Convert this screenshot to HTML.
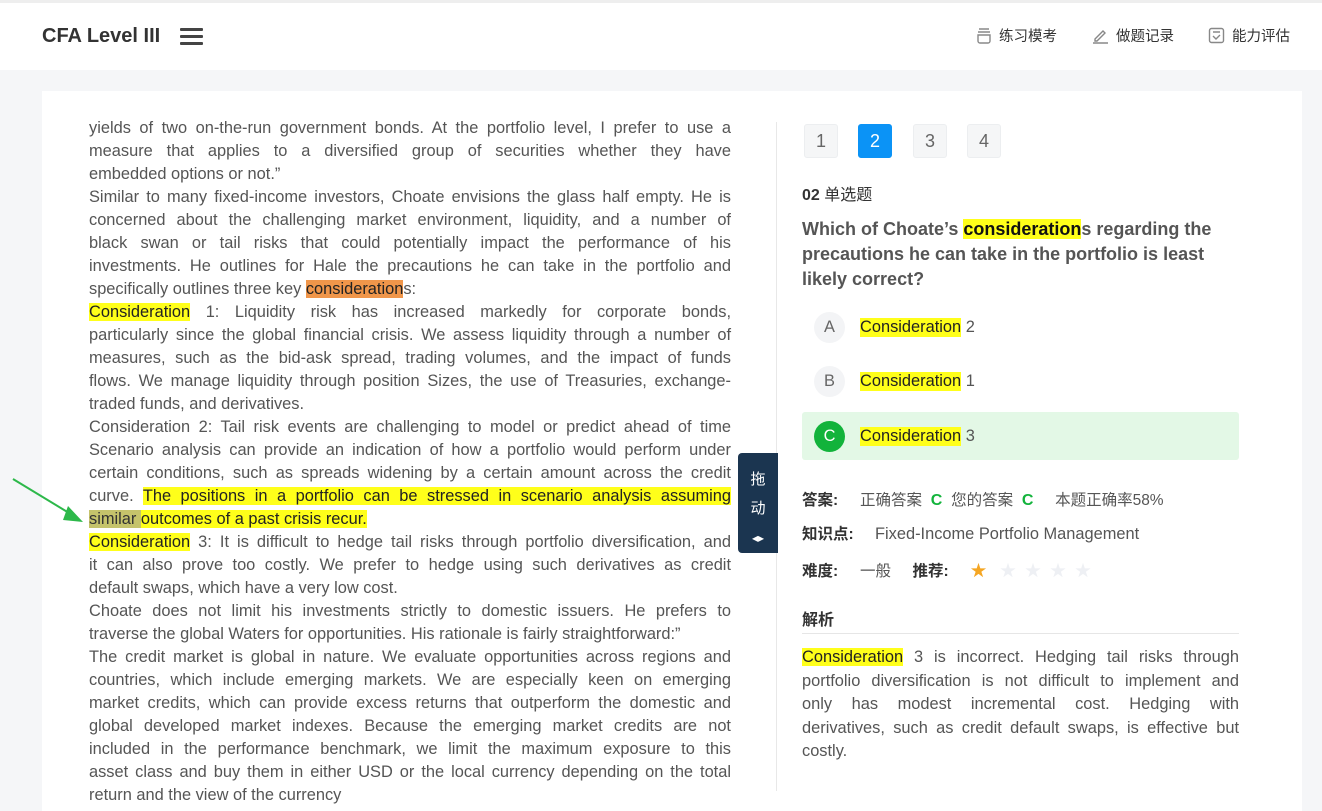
<!DOCTYPE html>
<html><head><meta charset="utf-8"><style>
*{margin:0;padding:0;box-sizing:border-box}
body{width:1322px;height:791px;overflow:hidden;background:#f5f6f8;font-family:"Liberation Sans","Noto Sans CJK SC",sans-serif;color:#555;position:relative}
.hdr{position:absolute;left:0;top:0;width:1322px;height:70px;background:#fff;border-top:3px solid #eee}
.logo{position:absolute;left:42px;top:22px;font-size:20px;font-weight:bold;color:#333}
.menu{position:absolute;left:180px;top:25px;width:23px}
.menu i{display:block;height:3px;background:#444;margin-bottom:4px;border-radius:1px}
.nav{position:absolute;top:22px;font-size:14.5px;color:#333;display:flex;align-items:center;gap:7px}
.card{position:absolute;left:42px;top:91px;width:1260px;height:720px;background:#fff}
.txt{position:absolute;left:89px;top:117px;width:642px;font-size:16.4px;line-height:23px;color:#555}
.txt div{text-align:justify;text-align-last:justify;white-space:nowrap}
.txt div.l{text-align-last:left}
.y{background:#ffff1a;color:#222}
.o{background:#f0964a;color:#222}
.g{background:#c5c36b;color:#333}
.div{position:absolute;left:776px;top:122px;width:1px;height:669px;background:#e8e8e8}
.drag{position:absolute;left:738px;top:453px;width:40px;height:100px;background:#1b3550;border-radius:4px 0 0 4px;color:#fff;font-size:15px;text-align:center;padding-top:12px;line-height:29px}
.pg{position:absolute;top:124px;width:34px;height:34px;border:1px solid #eceef0;background:#f5f6f7;border-radius:3px;text-align:center;line-height:32px;font-size:18px;color:#666}
.pg.a{background:#0b93f6;border-color:#0b93f6;color:#fff}
.r{position:absolute;left:802px}
.opt{position:absolute;left:802px;width:437px;height:48px;display:flex;align-items:center;font-size:16.4px;border-radius:3px}
.opt .c{width:31px;height:31px;border-radius:50%;background:#f3f4f6;margin-left:12px;margin-right:15px;text-align:center;line-height:31px;color:#666}
.lab{font-weight:bold;color:#333;display:inline-block}
.ex div{text-align:justify;text-align-last:justify;white-space:nowrap}
</style></head><body>
<div class="hdr">
<div class="logo">CFA Level III</div>
<div class="menu"><i></i><i></i><i></i></div>
<div class="nav" style="left:976px"><svg width="16" height="17" viewBox="0 0 16 17" fill="none" stroke="#888" stroke-width="1.4"><path d="M3 2h10M2 5h12M2 8h12v6a2 2 0 0 1-2 2H4a2 2 0 0 1-2-2z"/></svg>练习模考</div>
<div class="nav" style="left:1092px"><svg width="17" height="17" viewBox="0 0 17 17" fill="none" stroke="#888" stroke-width="1.4"><path d="M3 12l8-8 2 2-8 8H3zM1 16h15"/></svg>做题记录</div>
<div class="nav" style="left:1208px"><svg width="17" height="17" viewBox="0 0 17 17" fill="none" stroke="#888" stroke-width="1.4"><rect x="1.5" y="1.5" width="14" height="14" rx="2"/><path d="M5 5h7M5 9l3 3 4-4"/></svg>能力评估</div>
</div>
<div class="card"></div>
<div class="txt">
<div>yields of two on-the-run government bonds. At the portfolio level, I prefer to use a</div>
<div>measure that applies to a diversified group of securities whether they have</div>
<div class="l">embedded options or not.”</div>
<div>Similar to many fixed-income investors, Choate envisions the glass half empty. He is</div>
<div>concerned about the challenging market environment, liquidity, and a number of</div>
<div>black swan or tail risks that could potentially impact the performance of his</div>
<div>investments. He outlines for Hale the precautions he can take in the portfolio and</div>
<div class="l">specifically outlines three key <span class="o">consideration</span>s:</div>
<div><span class="y">Consideration</span> 1: Liquidity risk has increased markedly for corporate bonds,</div>
<div>particularly since the global financial crisis. We assess liquidity through a number of</div>
<div>measures, such as the bid-ask spread, trading volumes, and the impact of funds</div>
<div>flows. We manage liquidity through position Sizes, the use of Treasuries, exchange-</div>
<div class="l">traded funds, and derivatives.</div>
<div>Consideration 2: Tail risk events are challenging to model or predict ahead of time</div>
<div>Scenario analysis can provide an indication of how a portfolio would perform under</div>
<div>certain conditions, such as spreads widening by a certain amount across the credit</div>
<div>curve. <span class="y">The positions in a portfolio can be stressed in scenario analysis assuming</span></div>
<div class="l"><span class="g">similar </span><span class="y">outcomes of a past crisis recur.</span></div>
<div><span class="y">Consideration</span> 3: It is difficult to hedge tail risks through portfolio diversification, and</div>
<div>it can also prove too costly. We prefer to hedge using such derivatives as credit</div>
<div class="l">default swaps, which have a very low cost.</div>
<div>Choate does not limit his investments strictly to domestic issuers. He prefers to</div>
<div class="l">traverse the global Waters for opportunities. His rationale is fairly straightforward:”</div>
<div>The credit market is global in nature. We evaluate opportunities across regions and</div>
<div>countries, which include emerging markets. We are especially keen on emerging</div>
<div>market credits, which can provide excess returns that outperform the domestic and</div>
<div>global developed market indexes. Because the emerging market credits are not</div>
<div>included in the performance benchmark, we limit the maximum exposure to this</div>
<div>asset class and buy them in either USD or the local currency depending on the total</div>
<div class="l">return and the view of the currency</div>
</div>
<svg style="position:absolute;left:10px;top:476px" width="75" height="48" viewBox="0 0 75 48"><path d="M3 3L64 40" stroke="#2db84a" stroke-width="2"/><path d="M58 30L73 46 53 44z" fill="#2db84a"/></svg>
<div class="div"></div>
<div class="drag">拖<br>动<br><span style="font-size:12px">◂▸</span></div>
<div class="pg" style="left:804px">1</div>
<div class="pg a" style="left:858px">2</div>
<div class="pg" style="left:913px">3</div>
<div class="pg" style="left:967px">4</div>
<div class="r" style="top:181px;font-size:16px;color:#333"><b>02</b> 单选题</div>
<div class="r" style="top:217px;width:430px;font-size:18px;font-weight:bold;line-height:25px;color:#555">Which of Choate’s <span class="y" style="color:#111">consideration</span>s regarding the precautions he can take in the portfolio is least likely correct?</div>
<div class="opt" style="top:303px"><span class="c">A</span><span class="y">Consideration</span>&nbsp;2</div>
<div class="opt" style="top:357px"><span class="c">B</span><span class="y">Consideration</span>&nbsp;1</div>
<div class="opt" style="top:412px;background:#e3f8e6"><span class="c" style="background:#12b33b;color:#fff">C</span><span class="y">Consideration</span>&nbsp;3</div>
<div class="r" style="top:488px;font-size:15.5px"><span class="lab" style="width:58px">答案:</span>正确答案 <b style="color:#12b33b;font-size:16px">&nbsp;C&nbsp;</b> 您的答案 <b style="color:#12b33b;font-size:16px">&nbsp;C&nbsp;</b>&nbsp;&nbsp;&nbsp; 本题正确率58%</div>
<div class="r" style="top:522px;font-size:16.4px"><span class="lab" style="font-size:15.5px;width:73px">知识点:</span>Fixed-Income Portfolio Management</div>
<div class="r" style="top:557px;font-size:15.5px"><span class="lab" style="width:58px">难度:</span>一般&nbsp;&nbsp;&nbsp;&nbsp; <span class="lab" style="width:58px">推荐:</span><span style="color:#f5a623;font-size:16px">★</span><span style="color:#eef0f4;font-size:16px;letter-spacing:9px"> ★★★★</span></div>
<div class="r" style="top:606px;font-size:16px;font-weight:bold;color:#333">解析</div>
<div class="r" style="top:633px;width:437px;height:1px;background:#e6e6e6"></div>
<div class="r ex" style="top:646px;width:437px;font-size:16.4px;line-height:23.5px">
<div><span class="y">Consideration</span> 3 is incorrect. Hedging tail risks through</div>
<div>portfolio diversification is not difficult to implement and</div>
<div>only has modest incremental cost. Hedging with</div>
<div>derivatives, such as credit default swaps, is effective but</div>
<div style="text-align-last:left">costly.</div>
</div>
</body></html>
